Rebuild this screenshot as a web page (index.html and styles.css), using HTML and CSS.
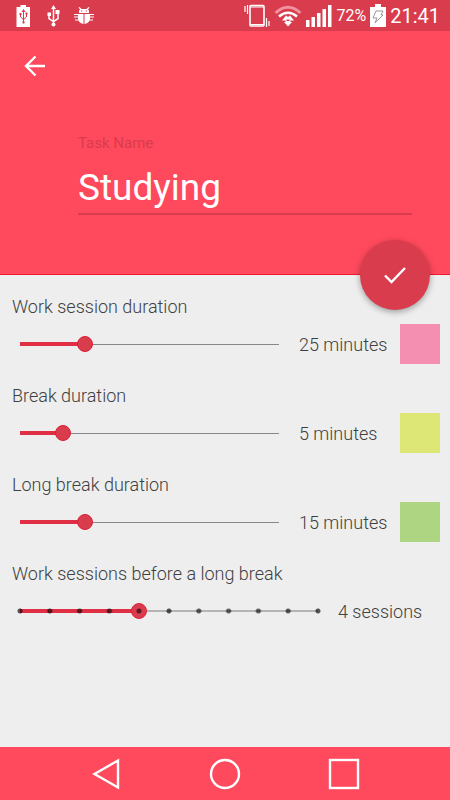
FILE: index.html
```html
<!DOCTYPE html>
<html lang="en">
<head>
<meta charset="utf-8">
<meta name="viewport" content="width=device-width, initial-scale=1">
<title>Edit task</title>
<link rel="stylesheet" href="styles.css">
</head>
<body>
<div class="status">
  <div class="status-left">
    <svg width="16" height="22" viewBox="0 0 16 22"><path fill="#fff" d="M4.500 0h5.500v2h4v20H.500V2h4z"/><path fill="none" stroke="#d93c4c" d="M7.500 6v12M4.500 9v3l3 2.500l3-2.500V8"/><path fill="#d93c4c" d="M7.500 4l2 3h-4zM3.500 8h2v2h-2zM9.500 7.500h2v2h-2zM6.500 16.500h2v2h-2z"/></svg>
    <svg width="14" height="22" viewBox="0 0 14 22"><path fill="none" stroke="#fff" stroke-width="1.500" d="M7.500 3v16M3 9v4.500l4.500 3 4.500-3V7"/><path fill="#fff" d="M7.500 0l2.500 4H5zM1.500 7.500H5V11H1.500zM9.500 5h4v4h-4z"/><circle cx="7.500" cy="19.500" r="2" fill="#fff"/></svg>
    <svg width="20" height="18" viewBox="0 0 20 18"><path fill="#fff" d="M5 6V4q0-1 1-1.500L4.500.500 5.500 0l2 2h5l2-2 1 .500L14 2.500q1 .500 1 1.500v2zM4 7h5.500v10Q4 16 4 11zM10.500 7H16v4q0 5-5.500 6z"/><path fill="none" stroke="#fff" stroke-width="1.200" d="M0 7.500h4M0 10h4M1 13h4M20 7.500h-4M20 10h-4M19 13h-4"/><path fill="#d93c4c" d="M7 3.500h1.300v1H7zM11.700 3.500H13v1h-1.300z"/></svg>
  </div>
  <div class="status-right">
    <svg width="26" height="24" viewBox="0 0 26 24"><rect x="6" y="1.500" width="14" height="20.500" rx="1" fill="none" stroke="#fff" stroke-width="1.600"/><path fill="none" stroke="#fff" stroke-width="1.200" d="M6 3h14M6 20.500h14M3.500 1v9M1 2v6M22.500 14v9M25 17v5"/></svg>
    <svg width="28" height="22" viewBox="0 0 28 22"><path fill="none" stroke="#f0929d" stroke-width="3" d="M1.500 8Q14-3.500 26.500 8"/><path fill="none" stroke="#fff" stroke-width="2.600" d="M5 11.500q9-7.500 18 0"/><path fill="#fff" d="M8 15.500l4-5 2 1.500 2-1.500 4 5h-3.500v1.500H18l-4 4.500-4-4.500h1.500v-1.500z"/><path fill="#d93c4c" d="M12.500 14.500h3v1.500h-3z"/></svg>
    <svg width="26" height="24" viewBox="0 0 26 24"><path fill="#fff" d="M0 16h3.500v7H0zM5.500 13H9v10H5.500zM11 9h3.500v14H11zM16.500 5H20v18h-3.500zM22 1h3.500v22H22z"/></svg>
    <span class="percent">72%</span>
    <svg width="16" height="24" viewBox="0 0 16 24"><path fill="#fff" d="M5 0h6v3h5v20H0V3h5z"/><path fill="none" stroke="#999" d="M6 7h7l-2 4h2l-8 8 2-5H3z"/></svg>
    <span class="clock">21:41</span>
  </div>
</div>
<header class="header">
  <button class="back" aria-label="Back"><svg width="22" height="22" viewBox="0 0 22 22"><path fill="none" stroke="#fff" stroke-width="2.400" d="M21 11H3M11.500 1.500 2 11l9.500 9.500"/></svg></button>
  <div class="task">
    <label for="task">Task Name</label>
    <input id="task" type="text" value="Studying">
  </div>
  <button class="save" aria-label="Save"><svg width="24" height="20" viewBox="0 0 24 20"><path fill="none" stroke="#fff" stroke-width="2.400" d="M2 10.500 8.500 17 22 3"/></svg></button>
</header>
<main class="settings">
  <section class="setting">
    <label for="work">Work session duration</label>
    <div class="row">
      <input id="work" class="range" type="range" min="0" max="100" value="25" style="--fill:0.25">
      <output for="work">25 minutes</output>
      <button class="swatch pink" aria-label="Work session color"></button>
    </div>
  </section>
  <section class="setting">
    <label for="break">Break duration</label>
    <div class="row">
      <input id="break" class="range" type="range" min="0" max="30" value="5" style="--fill:0.1667">
      <output for="break">5 minutes</output>
      <button class="swatch lime" aria-label="Break color"></button>
    </div>
  </section>
  <section class="setting">
    <label for="long">Long break duration</label>
    <div class="row">
      <input id="long" class="range" type="range" min="0" max="60" value="15" style="--fill:0.25">
      <output for="long">15 minutes</output>
      <button class="swatch green" aria-label="Long break color"></button>
    </div>
  </section>
  <section class="setting">
    <label for="count">Work sessions before a long break</label>
    <div class="row wide">
      <input id="count" class="range stepped" type="range" min="0" max="10" value="4" style="--fill:0.4">
      <output for="count">4 sessions</output>
    </div>
  </section>
</main>
<nav class="nav">
  <button aria-label="Back"><svg width="32" height="32" viewBox="0 0 32 32"><path fill="none" stroke="#fff" stroke-width="2.400" d="M28 2.500v27L4.500 16z"/></svg></button>
  <button aria-label="Home"><svg width="32" height="32" viewBox="0 0 32 32"><circle cx="16" cy="16" r="14" fill="none" stroke="#fff" stroke-width="2.400"/></svg></button>
  <button aria-label="Recent apps"><svg width="32" height="32" viewBox="0 0 32 32"><rect x="2" y="2" width="28" height="28" fill="none" stroke="#fff" stroke-width="2.400"/></svg></button>
</nav>
</body>
</html>
```
FILE: styles.css
```css
* { box-sizing: border-box; }

body {
  margin: 0;
  min-height: 100vh;
  display: flex;
  flex-direction: column;
  background: #eee;
  color: #404040;
  font-family: Roboto, sans-serif;
}

svg { display: block; flex: none; }

button {
  border: 0;
  padding: 0;
  background: none;
  display: flex;
  align-items: center;
  justify-content: center;
}

.status {
  height: 31px;
  padding: 0 10px 0 16px;
  display: flex;
  align-items: center;
  justify-content: space-between;
  background: #d93c4c;
  color: #fff;
}

.status-left { display: flex; align-items: center; gap: 14px; }
.status-right { display: flex; align-items: center; gap: 4px; }
.percent { font-size: 16px; }
.clock { font-size: 20px; }

.header {
  position: relative;
  height: 244px;
  padding: 24px 38px 0 24px;
  background: #ff495c;
  border-bottom: 1px solid #f01832;
}

.task { margin: 56px 0 0 54px; }

.task label {
  display: block;
  font-size: 15px;
  line-height: 20px;
  color: #d93c4c;
}

.task input {
  display: block;
  width: 100%;
  height: 62px;
  padding: 8px 0 0;
  border: 0;
  border-bottom: 2px solid #d93c4c;
  background: none;
  color: #fff;
  font-family: inherit;
  font-size: 37px;
}

.save {
  position: absolute;
  right: 20px;
  bottom: -36px;
  width: 70px;
  height: 70px;
  border-radius: 50%;
  background: #d93c4c;
  box-shadow: 0 2px 6px rgba(0, 0, 0, 0.35);
}

.settings {
  flex: 1;
  padding: 20px 10px 0 12px;
  display: flex;
  flex-direction: column;
  gap: 20px;
}

.setting label {
  display: block;
  height: 29px;
  font-size: 18px;
  font-weight: 300;
  line-height: 24px;
}

.row {
  height: 40px;
  display: grid;
  grid-template-columns: 1fr 89px 40px;
  column-gap: 12px;
  align-items: center;
}

.row.wide { grid-template-columns: 1fr 102px; }

.row output {
  font-size: 18px;
  font-weight: 300;
  white-space: nowrap;
}

.range {
  -webkit-appearance: none;
  appearance: none;
  width: 100%;
  height: 16px;
  margin: 0;
  --rail: #888;
  --rail-size: 1px;
  background:
    linear-gradient(#e02f45, #e02f45) 8px center / calc((100% - 16px) * var(--fill)) 4px no-repeat,
    linear-gradient(var(--rail), var(--rail)) center / calc(100% - 16px) var(--rail-size) no-repeat;
}

.range::-webkit-slider-thumb {
  -webkit-appearance: none;
  width: 16px;
  height: 16px;
  border: 1px solid #dc1f38;
  border-radius: 50%;
  background: #d93c4c;
}

.stepped {
  --rail: #b5b5b5;
  --rail-size: 2px;
  --step: calc((100% - 16px) / 10);
  background:
    radial-gradient(circle at 0 50%, rgba(0, 0, 0, 0.65) 2px, transparent 3px) 8px center / var(--step) 16px,
    radial-gradient(circle at 100% 50%, rgba(0, 0, 0, 0.65) 2px, transparent 3px) 8px center / var(--step) 16px,
    linear-gradient(#e02f45, #e02f45) 8px center / calc((100% - 16px) * var(--fill)) 4px no-repeat,
    linear-gradient(var(--rail), var(--rail)) center / calc(100% - 16px) var(--rail-size) no-repeat;
}

.stepped::-webkit-slider-thumb {
  background: radial-gradient(circle, #5c1a22 2px, #d93c4c 3px);
}

.swatch { width: 40px; height: 40px; }
.pink { background: #f48fb1; }
.lime { background: #dce775; }
.green { background: #aed581; }

.nav {
  height: 53px;
  display: flex;
  justify-content: center;
  background: #ff495c;
}

.nav button { width: 119px; }
```
